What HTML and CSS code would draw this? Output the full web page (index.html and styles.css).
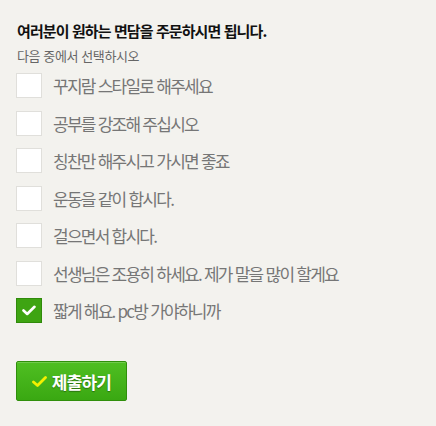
FILE: index.html
```html
<!DOCTYPE html>
<html lang="ko">
<head>
    <meta charset="UTF-8">
    <meta name="viewport" content="width=device-width, initial-scale=1.0">
    <title>면담 주문</title>
    <link rel="stylesheet" href="styles.css">
</head>
<body>
    <form class="survey">
        <h2 class="survey-title">여러분이 원하는 면담을 주문하시면 됩니다.</h2>
        <p class="survey-desc">다음 중에서 선택하시오</p>

        <ul class="options">
            <li class="option"><span class="box"></span><span class="label">꾸지람 스타일로 해주세요</span></li>
            <li class="option"><span class="box"></span><span class="label">공부를 강조해 주십시오</span></li>
            <li class="option"><span class="box"></span><span class="label">칭찬만 해주시고 가시면 좋죠</span></li>
            <li class="option"><span class="box"></span><span class="label">운동을 같이 합시다.</span></li>
            <li class="option"><span class="box"></span><span class="label">걸으면서 합시다.</span></li>
            <li class="option"><span class="box"></span><span class="label">선생님은 조용히 하세요. 제가 말을 많이 할게요</span></li>
            <li class="option checked">
                <span class="box">
                    <svg width="14" height="11" viewBox="0 0 14 11"><path d="M1.5 5.5 L5.2 9 L12.5 1.8" fill="none" stroke="#fff" stroke-width="2.6" stroke-linecap="round" stroke-linejoin="round"/></svg>
                </span>
                <span class="label">짧게 해요. pc방 가야하니까</span>
            </li>
        </ul>

        <button type="button" class="submit">
            <svg width="15" height="11" viewBox="0 0 15 11"><path d="M1.5 6 L5.5 9.5 L13.5 1.5" fill="none" stroke="#f4f000" stroke-width="2.8" stroke-linecap="round" stroke-linejoin="round"/></svg>
            제출하기
        </button>
    </form>
</body>
</html>
```

FILE: styles.css
```css
body {
    margin: 0;
    background-color: #f3f2ee;
    font-family: "Noto Sans CJK KR", "Noto Sans", sans-serif;
}
.survey {
    padding: 21px 16px 20px;
}
.survey-title {
    margin: 0 1px;
    font-size: 15px;
    font-weight: bold;
    color: #111;
    letter-spacing: -0.9px;
    line-height: 20px;
}
.survey-desc {
    margin: 6px 1px 0;
    font-size: 13px;
    color: #666;
    letter-spacing: -0.4px;
    line-height: 17px;
}
.options {
    list-style: none;
    margin: 9px 0 0;
    padding: 0;
    display: flex;
    flex-direction: column;
    gap: 12.5px;
}
.option {
    display: flex;
    align-items: center;
    gap: 11px;
    height: 25px;
}
.box {
    width: 24px;
    height: 23px;
    background: #fff;
    border: 1px solid #e0dfdb;
    display: flex;
    align-items: center;
    justify-content: center;
}
.checked .box {
    background: #3ea412;
    border-color: #2f8a0a;
}
.label {
    font-size: 17px;
    color: #767676;
    letter-spacing: -1.75px;
}
.submit {
    margin-top: 38px;
    width: 111px;
    height: 40px;
    display: flex;
    align-items: center;
    justify-content: center;
    gap: 5px;
    background: linear-gradient(#4fbf22, #3aa812);
    border: 1px solid #2f8f0b;
    border-radius: 2px;
    box-shadow: inset 0 1px 0 rgba(255, 255, 255, 0.2);
    color: #fff;
    font-family: "Noto Sans CJK KR", sans-serif;
    font-size: 17px;
    font-weight: bold;
    letter-spacing: -0.8px;
    text-shadow: 0 1px 1px rgba(0, 0, 0, 0.35);
    padding: 0;
}
```
